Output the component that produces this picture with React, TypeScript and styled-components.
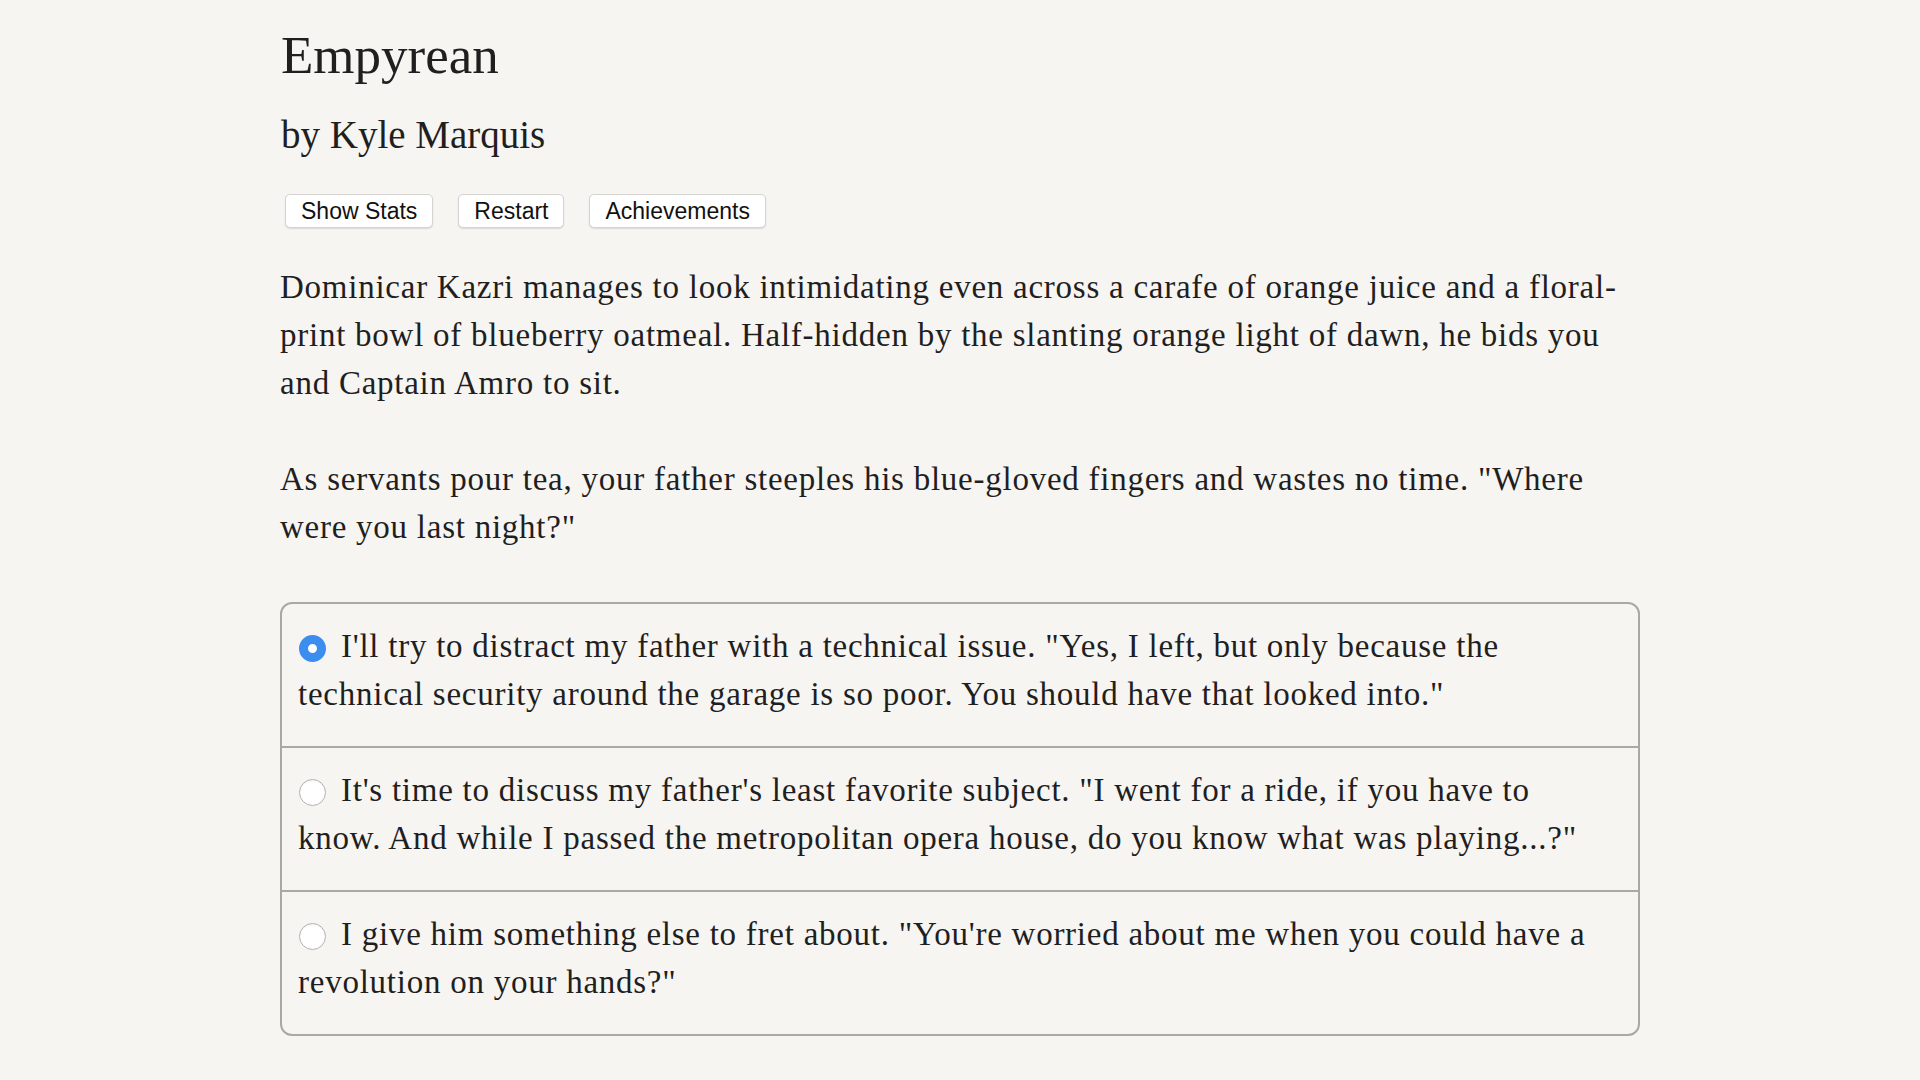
import styled, { createGlobalStyle } from "styled-components";

const GlobalStyle = createGlobalStyle`
  html, body {
    margin: 0;
    padding: 0;
    background: #f7f5f2;
  }
  body {
    font-family: "Liberation Serif", "Times New Roman", serif;
    color: #1f1f1f;
  }
`;

const Page = styled.main`
  width: 1360px;
  margin: 0 auto;
  padding: 25px 0 40px;
`;

const Title = styled.h1`
  font-size: 53px;
  font-weight: normal;
  line-height: 60px;
  margin: 0 0 0 1px;
`;

const Byline = styled.h2`
  font-size: 39px;
  font-weight: normal;
  line-height: 44px;
  margin: 28px 0 0 1px;
`;

const Toolbar = styled.div`
  display: flex;
  gap: 25px;
  margin: 37px 0 0 5px;
`;

const Button = styled.button`
  height: 34px;
  padding: 0 15px;
  font-family: "Liberation Sans", Arial, sans-serif;
  font-size: 23px;
  line-height: 26px;
  color: #111;
  background: #fff;
  border: 1px solid #d6d4d1;
  border-radius: 5px;
  box-shadow: 0 1px 1.5px rgba(0, 0, 0, 0.12);
  cursor: pointer;
`;

const Story = styled.div`
  margin-top: 35px;
`;

const Para = styled.p`
  margin: 0 0 48px;
  font-size: 33px;
  line-height: 48px;
  letter-spacing: 0.75px;
`;

const Choices = styled.form`
  margin-top: 51px;
  border: 2px solid #aaa8a5;
  border-radius: 12px;
  overflow: hidden;
`;

const Choice = styled.label`
  display: block;
  padding: 18px 26px 28px 16px;
  font-size: 33px;
  line-height: 48px;
  letter-spacing: 0.75px;
  cursor: pointer;
  & + & {
    border-top: 2px solid #aaa8a5;
  }
`;

const Radio = styled.span<{ $checked: boolean }>`
  display: inline-block;
  box-sizing: border-box;
  width: 27px;
  height: 27px;
  margin: 0 15px 0 1px;
  vertical-align: -5px;
  border-radius: 50%;
  background: #fff;
  border: ${(p) => (p.$checked ? "9px solid #3b8ef0" : "1px solid #b3b1ae")};
  box-shadow: ${(p) => (p.$checked ? "none" : "inset 0 1px 2px rgba(0, 0, 0, 0.05)")};
`;

const options = [
  `I'll try to distract my father with a technical issue. "Yes, I left, but only because the technical security around the garage is so poor. You should have that looked into."`,
  `It's time to discuss my father's least favorite subject. "I went for a ride, if you have to know. And while I passed the metropolitan opera house, do you know what was playing...?"`,
  `I give him something else to fret about. "You're worried about me when you could have a revolution on your hands?"`,
];

export default function App() {
  return (
    <>
      <GlobalStyle />
      <Page>
        <Title>Empyrean</Title>
        <Byline>by Kyle Marquis</Byline>
        <Toolbar>
          <Button>Show Stats</Button>
          <Button>Restart</Button>
          <Button>Achievements</Button>
        </Toolbar>
        <Story>
          <Para>
            Dominicar Kazri manages to look intimidating even across a carafe of orange juice and a
            floral-print bowl of blueberry oatmeal. Half-hidden by the slanting orange light of dawn,
            he bids you and Captain Amro to sit.
          </Para>
          <Para>
            As servants pour tea, your father steeples his blue-gloved fingers and wastes no time.
            "Where were you last night?"
          </Para>
        </Story>
        <Choices>
          {options.map((text, i) => (
            <Choice key={i}>
              <Radio $checked={i === 0} />
              {text}
            </Choice>
          ))}
        </Choices>
      </Page>
    </>
  );
}
